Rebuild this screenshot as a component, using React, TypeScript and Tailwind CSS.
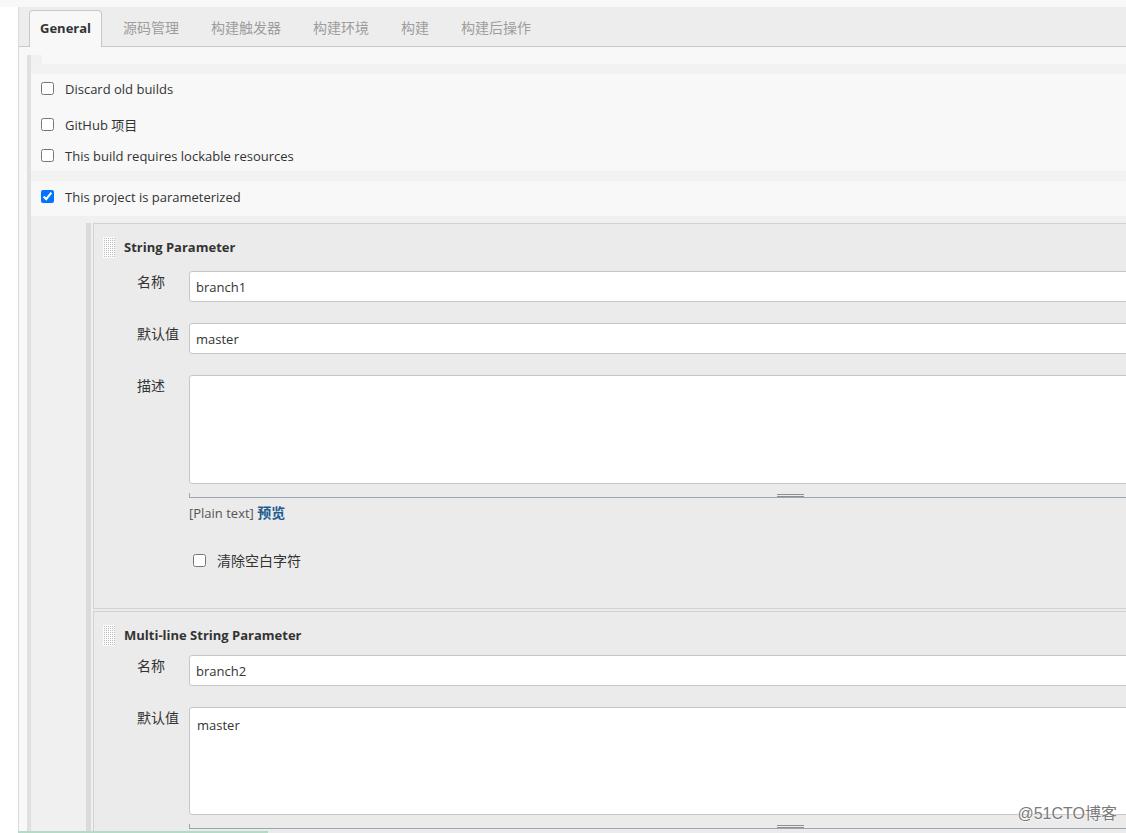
import React from "react";

const FONT = "font-['Open_Sans','Noto_Sans_CJK_SC',sans-serif]";

function Grip() {
  const dots: React.ReactElement[] = [];
  for (let y = 0; y < 10; y++) {
    for (let x = 0; x < 6; x++) {
      dots.push(<rect key={`${x}-${y}`} x={x * 2 + 1} y={y * 2 + 1} width="1" height="1" fill="#bdbdbd" />);
    }
  }
  return (
    <svg width="12" height="21" viewBox="0 0 12 21" shapeRendering="crispEdges" className="shrink-0 block">
      <rect x="0" y="0" width="12" height="21" fill="#fbfbfb" />
      {dots}
    </svg>
  );
}

function CheckRow({ label, checked, className = "" }: { label: React.ReactNode; checked?: boolean; className?: string }) {
  return (
    <div className={`flex items-center h-[13px] gap-[11px] ${className}`}>
      <input type="checkbox" defaultChecked={checked} className="m-0 w-[13px] h-[13px] shrink-0" />
      <span className="text-[13px] leading-[20px] text-[#333] whitespace-nowrap">{label}</span>
    </div>
  );
}

function TextInput({ value }: { value: string }) {
  return (
    <div className="w-[1203px] h-[31px] shrink-0 bg-white border border-[#c6c6c6] rounded-[3px] flex items-center pt-[2px] px-[6px] text-[13px] text-[#333]">
      {value}
    </div>
  );
}

function TextArea({ value, h }: { value?: string; h: string }) {
  return (
    <div className={`w-[1203px] ${h} shrink-0 bg-white border border-[#c6c6c6] rounded-[3px] px-[7px] pt-[8px] text-[13px] leading-[18px] text-[#333]`}>
      {value}
    </div>
  );
}

function ResizeBar() {
  return (
    <div className="ml-[52px] w-[1203px] h-[14px] relative border-b border-[#9ba6b3]">
      <div className="absolute left-0 bottom-0 w-px h-[4px] bg-[#9ba6b3]" />
      <div className="absolute left-[588px] top-[10px] w-[27px] h-[3px] border-y border-[#8e8e8e]" />
    </div>
  );
}

function FieldRow({ label, children, className = "" }: { label: string; children: React.ReactNode; className?: string }) {
  return (
    <div className={`flex ${className}`}>
      <div className="w-[52px] shrink-0 pt-[1px] text-[14px] leading-[20px] text-[#333]">{label}</div>
      {children}
    </div>
  );
}

function PanelHeader({ title }: { title: string }) {
  return (
    <div className="pt-[13px] pl-[9px] flex items-center gap-[9px]">
      <Grip />
      <span className="text-[13px] font-bold text-[#333] whitespace-nowrap">{title}</span>
    </div>
  );
}

export default function App() {
  const tabs = ["源码管理", "构建触发器", "构建环境", "构建", "构建后操作"];
  return (
    <div className={`w-[1126px] h-[833px] overflow-hidden relative bg-white ${FONT}`}>
      <div className="h-[7px] bg-[#f8f8f8]" />
      <div className="flex">
        <div className="w-[18px] shrink-0 bg-white" />
        <div className="flex-1 min-w-0 border-l border-[#dcdcdc] overflow-hidden">
          {/* Tab bar */}
          <div className="h-[40px] bg-[#ededed] border-b border-[#c8c8c8] flex items-end pl-[10px] gap-[10px]">
            <div className="h-[37px] -mb-px px-[10px] border border-b-0 border-[#c8c8c8] rounded-t-[4px] bg-[#f8f8f8] flex items-center text-[13px] font-bold text-[#333]">
              General
            </div>
            {tabs.map((t) => (
              <div key={t} className="h-[37px] px-[11px] flex items-center text-[14px] text-[#9d9d9d] whitespace-nowrap">
                {t}
              </div>
            ))}
          </div>

          {/* Content */}
          <div className="bg-[#f8f8f8] pl-[8px] pt-[8px]">
            <div className="border-l-[4px] border-[#e0e0e0]">
              <div className="h-[9px] flex">
                <div className="w-[11px] bg-[#f1f1f1]" />
              </div>
              <div className="h-[10px] bg-[#f2f2f2]" />
              <div className="pt-[8px] pb-[9px] pl-[10px]">
                <CheckRow label="Discard old builds" />
                <CheckRow label="GitHub 项目" className="mt-[23px]" />
                <CheckRow label="This build requires lockable resources" className="mt-[18px]" />
              </div>
              <div className="h-[10px] bg-[#f2f2f2]" />
              <div className="h-[35px] pl-[10px] pt-[9px]">
                <CheckRow label="This project is parameterized" checked />
              </div>

              <div className="bg-[#f0f0f0] pt-[7px] pl-[55px]">
                <div className="border-l-[5px] border-[#dadada] pl-[2px] bg-[#f0f0f0]">
                  {/* Panel 1 */}
                  <div className="border border-r-0 border-[#d2d2d2] bg-[#ebebeb] pb-[41px]">
                    <PanelHeader title="String Parameter" />
                    <div className="mt-[13px] pl-[43px]">
                      <FieldRow label="名称">
                        <TextInput value="branch1" />
                      </FieldRow>
                      <FieldRow label="默认值" className="mt-[21px]">
                        <TextInput value="master" />
                      </FieldRow>
                      <FieldRow label="描述" className="mt-[21px]">
                        <TextArea h="h-[109px]" />
                      </FieldRow>
                      <ResizeBar />
                      <div className="ml-[52px] mt-[5px] leading-[20px] text-[13px] text-[#555] whitespace-nowrap">
                        [Plain text] <span className="font-bold text-[14px] text-[#1f5c8f]">预览</span>
                      </div>
                      <div className="ml-[56px] mt-[31px] flex items-center h-[13px] gap-[11px]">
                        <input type="checkbox" className="m-0 w-[13px] h-[13px] shrink-0" />
                        <span className="text-[14px] leading-[20px] text-[#333]">清除空白字符</span>
                      </div>
                    </div>
                  </div>
                  <div className="h-[2px] bg-[#ebebeb]" />
                  {/* Panel 2 */}
                  <div className="border border-r-0 border-b-0 border-[#d2d2d2] bg-[#ebebeb] pb-[40px]">
                    <PanelHeader title="Multi-line String Parameter" />
                    <div className="mt-[9px] pl-[43px]">
                      <FieldRow label="名称">
                        <TextInput value="branch2" />
                      </FieldRow>
                      <FieldRow label="默认值" className="mt-[21px]">
                        <TextArea value="master" h="h-[108px]" />
                      </FieldRow>
                      <ResizeBar />
                    </div>
                  </div>
                </div>
              </div>
            </div>
          </div>
        </div>
      </div>

      <div className="absolute left-[18px] bottom-0 w-[250px] h-[2px] bg-[#b3dcc7]" />
      <div className="absolute right-[9px] bottom-[9px] text-[16px] leading-[20px] text-[#7a7a7a] font-['Liberation_Sans','Noto_Sans_CJK_SC',sans-serif] [text-shadow:0_0_2px_#fff,0_0_2px_#fff]">
        @51CTO博客
      </div>
    </div>
  );
}
